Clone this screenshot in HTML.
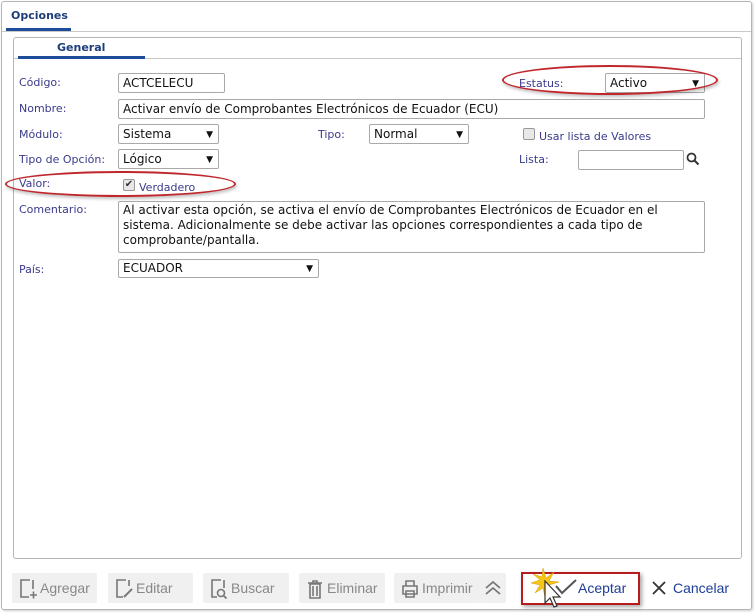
<!DOCTYPE html>
<html><head><meta charset="utf-8"><style>
*{box-sizing:border-box;margin:0;padding:0}
body{width:756px;height:613px;background:#fff;position:relative;overflow:hidden;font-family:"DejaVu Sans","Liberation Sans",sans-serif;font-size:11px;color:#333}
.a{position:absolute}
.lbl{position:absolute;color:#3a3a8c;font-size:11px}
.in{position:absolute;border:1px solid #a9a9a9;border-radius:2px;background:#fff;font-size:12px;color:#111;padding:1px 4px;line-height:16px}
.sel{position:absolute;border:1px solid #a9a9a9;border-radius:2px;background:#fff;font-size:12px;color:#111;padding:1px 4px;line-height:16px}
.sel:after{content:"▼";position:absolute;right:5px;top:2px;font-size:9px}
.ell{position:absolute;border:2px solid #c0272d;border-radius:50%;box-shadow:1px 2px 3px rgba(0,0,0,.25)}
.btn{position:absolute;top:573px;height:30px;background:#f0f0f0;border-radius:2px;color:#888;font-family:"Liberation Sans",sans-serif;font-size:14px;line-height:30px}
.btn svg{position:absolute;left:6px;top:5px}
.btn span{position:absolute;left:28px}
.cb{position:absolute;width:12px;height:12px;border:1px solid #999;border-radius:2px;background:#e8e8e8}
</style></head><body>
<div class="a" style="left:1px;top:1px;width:751px;height:609px;border:1px solid #b5b5b5;border-radius:3px;box-shadow:1px 1px 2px #ccc"></div>
<div class="a" style="left:2px;top:31px;width:749px;height:1px;background:#c8c8c8"></div>
<div class="a" style="left:11px;top:9px;font-weight:bold;color:#1d3d7a;font-size:11px">Opciones</div>
<div class="a" style="left:6px;top:28px;width:65px;height:3px;background:#1d4c9a"></div>

<div class="a" style="left:13px;top:37px;width:729px;height:522px;border:1px solid #b5b5b5;border-radius:3px"></div>
<div class="a" style="left:14px;top:58px;width:727px;height:1px;background:#c8c8c8"></div>
<div class="a" style="left:57px;top:41px;font-weight:bold;color:#1d3d7a;font-size:11px">General</div>
<div class="a" style="left:18px;top:56px;width:127px;height:3px;background:#1d4c9a"></div>

<div class="lbl" style="left:19px;top:76px">Código:</div>
<div class="in" style="left:118px;top:73px;width:107px;height:20px">ACTCELECU</div>
<div class="lbl" style="left:519px;top:77px">Estatus:</div>
<div class="sel" style="left:605px;top:73px;width:100px;height:20px">Activo</div>
<div class="ell" style="left:502px;top:65px;width:216px;height:30px"></div>

<div class="lbl" style="left:19px;top:102px">Nombre:</div>
<div class="in" style="left:118px;top:99px;width:587px;height:20px">Activar envío de Comprobantes Electrónicos de Ecuador (ECU)</div>

<div class="lbl" style="left:19px;top:128px">Módulo:</div>
<div class="sel" style="left:118px;top:124px;width:101px;height:20px">Sistema</div>
<div class="lbl" style="left:318px;top:128px">Tipo:</div>
<div class="sel" style="left:369px;top:124px;width:100px;height:20px">Normal</div>
<div class="cb" style="left:523px;top:128px"></div>
<div class="lbl" style="left:539px;top:130px">Usar lista de Valores</div>

<div class="lbl" style="left:19px;top:153px">Tipo de Opción:</div>
<div class="sel" style="left:118px;top:149px;width:101px;height:20px">Lógico</div>
<div class="lbl" style="left:519px;top:153px">Lista:</div>
<div class="in" style="left:578px;top:150px;width:106px;height:20px"></div>
<svg class="a" style="left:686px;top:152px" width="14" height="14" viewBox="0 0 14 14"><circle cx="5.5" cy="5.5" r="4" fill="none" stroke="#333" stroke-width="1.8"/><path d="M8.5 8.5L12.5 12.5" stroke="#333" stroke-width="2"/></svg>

<div class="lbl" style="left:19px;top:177px">Valor:</div>
<div class="cb" style="left:123px;top:179px;font-size:10px;line-height:10px;text-align:center;color:#333">✔</div>
<div class="lbl" style="left:139px;top:181px">Verdadero</div>
<div class="ell" style="left:5px;top:171px;width:231px;height:26px"></div>

<div class="lbl" style="left:19px;top:203px">Comentario:</div>
<div class="in" style="left:118px;top:201px;width:587px;height:52px;line-height:15px">Al activar esta opción, se activa el envío de Comprobantes Electrónicos de Ecuador en el sistema. Adicionalmente se debe activar las opciones correspondientes a cada tipo de comprobante/pantalla.</div>

<div class="lbl" style="left:19px;top:263px">País:</div>
<div class="sel" style="left:118px;top:259px;width:201px;height:19px;line-height:15px">ECUADOR</div>

<div class="btn" style="left:12px;width:85px"><svg width="20" height="22" viewBox="0 0 20 22"><path d="M12 2H3v17h8" fill="none" stroke="#777" stroke-width="1.6"/><path d="M15 2v9M12 17h7M15.5 13.5v7" stroke="#777" stroke-width="1.6"/></svg><span>Agregar</span></div>
<div class="btn" style="left:108px;width:85px"><svg width="20" height="22" viewBox="0 0 20 22"><path d="M12 2H3v17h6M15 2v6" fill="none" stroke="#777" stroke-width="1.6"/><path d="M10 19l8-8" stroke="#777" stroke-width="2"/></svg><span>Editar</span></div>
<div class="btn" style="left:203px;width:86px"><svg width="20" height="22" viewBox="0 0 20 22"><path d="M12 2H3v17h5M15 2v8" fill="none" stroke="#777" stroke-width="1.6"/><circle cx="12" cy="15" r="3.5" fill="none" stroke="#777" stroke-width="1.6"/><path d="M14.5 17.5l3 3" stroke="#777" stroke-width="1.8"/></svg><span>Buscar</span></div>
<div class="btn" style="left:299px;width:86px"><svg width="20" height="22" viewBox="0 0 20 22"><path d="M3 5h14M8 5V3h4v2M5 6h10v14H5zM8 8v10M12 8v10" fill="none" stroke="#777" stroke-width="1.6"/></svg><span>Eliminar</span></div>
<div class="btn" style="left:394px;width:86px"><svg width="20" height="22" viewBox="0 0 20 22"><path d="M6 8V3h8v5M3 8h14v8H3zM6 13h8v6H6z" fill="#f0f0f0" stroke="#777" stroke-width="1.6"/></svg><span>Imprimir</span></div>
<div class="btn" style="left:480px;width:26px"><svg style="left:3px;top:6px" width="20" height="18" viewBox="0 0 20 18"><path d="M3 9l7-6 7 6M3 15l7-6 7 6" fill="none" stroke="#777" stroke-width="1.8"/></svg></div>

<div class="a" style="left:521px;top:572px;width:119px;height:33px;border:2px solid #b71c1c;box-shadow:2px 2px 4px rgba(0,0,0,.35)"></div>
<svg class="a" style="left:530px;top:568px" width="50" height="42" viewBox="0 0 50 42"><path d="M13 0l3 10 8-6-5 9 10 1-10 3 6 8-9-5-1 9-2-9-8 5 5-8-9-2 9-3-7-6 9 3z" fill="#f5c518" stroke="#d49a00" stroke-width=".5"/><path d="M26 18l6 7 14-13" fill="none" stroke="#555" stroke-width="2"/><path d="M15 13v22l5-5 4 9 3-1-4-9h7z" fill="#fff" stroke="#333" stroke-width="1.2"/></svg>
<div class="a" style="left:578px;top:580px;color:#1d3d9a;font-family:'Liberation Sans',sans-serif;font-size:14px">Aceptar</div>
<svg class="a" style="left:651px;top:580px" width="16" height="16" viewBox="0 0 16 16"><path d="M2 2l12 12M14 2L2 14" stroke="#333" stroke-width="1.8"/></svg>
<div class="a" style="left:673px;top:580px;color:#1d3d9a;font-family:'Liberation Sans',sans-serif;font-size:14px">Cancelar</div>
</body></html>
